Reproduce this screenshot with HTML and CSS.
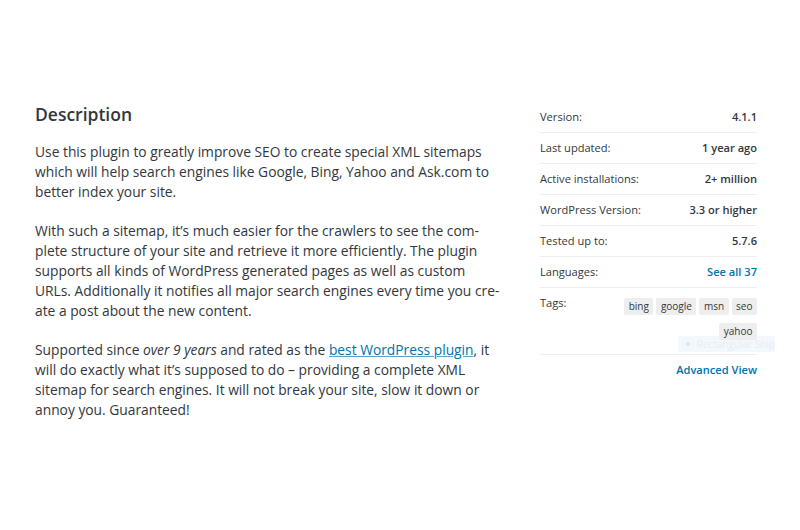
FILE: index.html
```html
<!DOCTYPE html>
<html lang="en">
<head>
    <meta charset="UTF-8">
    <meta name="viewport" content="width=device-width, initial-scale=1.0">
    <title>Google XML Sitemaps</title>
    <link rel="stylesheet" href="styles.css">
</head>
<body>
<div class="plugin-page">
    <div class="description">
        <h2>Description</h2>
        <p>Use this plugin to greatly improve SEO to create special XML sitemaps which will help search engines like Google, Bing, Yahoo and Ask.com to better index your site.</p>
        <p>With such a sitemap, it’s much easier for the crawlers to see the com&shy;plete structure of your site and retrieve it more efficiently. The plugin supports all kinds of WordPress generated pages as well as custom URLs. Additionally it notifies all major search engines every time you cre&shy;ate a post about the new content.</p>
        <p>Supported since <em>over 9 years</em> and rated as the <a href="#">best WordPress plugin</a>, it will do exactly what it’s supposed to do – providing a complete XML sitemap for search engines. It will not break your site, slow it down or annoy you. Guaranteed!</p>
    </div>
    <div class="meta">
        <ul class="meta-list">
            <li><span>Version:</span><strong>4.1.1</strong></li>
            <li><span>Last updated:</span><strong>1 year ago</strong></li>
            <li><span>Active installations:</span><strong>2+ million</strong></li>
            <li><span>WordPress Version:</span><strong>3.3 or higher</strong></li>
            <li><span>Tested up to:</span><strong>5.7.6</strong></li>
            <li><span>Languages:</span><a href="#">See all 37</a></li>
            <li class="tags-row">
                <span>Tags:</span>
                <div class="snip"><i></i>Rectangular Snip</div>
                <div class="tags">
                    <a href="#">bing</a>
                    <a href="#">google</a>
                    <a href="#">msn</a>
                    <a href="#">seo</a>
                    <a href="#">yahoo</a>
                </div>
            </li>
        </ul>
        <a href="#" class="advanced">Advanced View</a>
    </div>
</div>
</body>
</html>
```

FILE: styles.css
```css
body {
    margin: 0;
    background-color: #fff;
    color: #32373c;
    font-family: "Open Sans", sans-serif;
}

.plugin-page {
    display: flex;
    justify-content: space-between;
    padding: 102px 43px 0 35px;
}

.description {
    width: 466px;
}

.description h2 {
    margin: 0 0 16px;
    font-size: 17.5px;
    font-weight: 600;
    line-height: 24px;
}

.description p {
    margin: 0 0 20px;
    font-size: 13.8px;
    line-height: 19.8px;
    hyphens: manual;
}

.description a {
    color: #0073aa;
    text-decoration: underline;
    text-decoration-color: #5ba3cc;
}

.meta {
    width: 217px;
    font-size: 11.1px;
}

.meta-list {
    list-style: none;
    margin: 0;
    padding: 0;
}

.meta-list li {
    display: flex;
    justify-content: space-between;
    align-items: flex-start;
    padding: 7px 0;
    line-height: 16px;
    border-bottom: 1px solid #eee;
    position: relative;
}

.meta-list strong {
    font-weight: 600;
}

.meta-list a {
    color: #0073aa;
    font-weight: 600;
    text-decoration: none;
}

.meta-list .tags-row {
    padding-bottom: 14px;
}

.tags {
    display: flex;
    flex-wrap: wrap;
    justify-content: flex-end;
    gap: 8px 3px;
    width: 140px;
    margin-top: 3px;
    position: relative;
}

.meta-list .tags a {
    background-color: #eee;
    color: #32373c;
    font-weight: 400;
    font-size: 10px;
    line-height: 17px;
    padding: 0 4.5px;
    border-radius: 2px;
}

.snip {
    position: absolute;
    left: 138px;
    top: 48px;
    width: 97px;
    height: 16px;
    background-color: #f3f8fd;
    color: #e6edf5;
    font-size: 10px;
    line-height: 16px;
    white-space: nowrap;
    overflow: hidden;
    display: flex;
    align-items: center;
    gap: 7px;
    padding-left: 8px;
    box-sizing: border-box;
}

.snip i {
    width: 4px;
    height: 4px;
    border-radius: 50%;
    background-color: #dde6f0;
}

.advanced {
    display: block;
    text-align: right;
    margin-top: 7px;
    line-height: 16px;
    color: #0073aa;
    font-weight: 600;
    text-decoration: none;
}
```
